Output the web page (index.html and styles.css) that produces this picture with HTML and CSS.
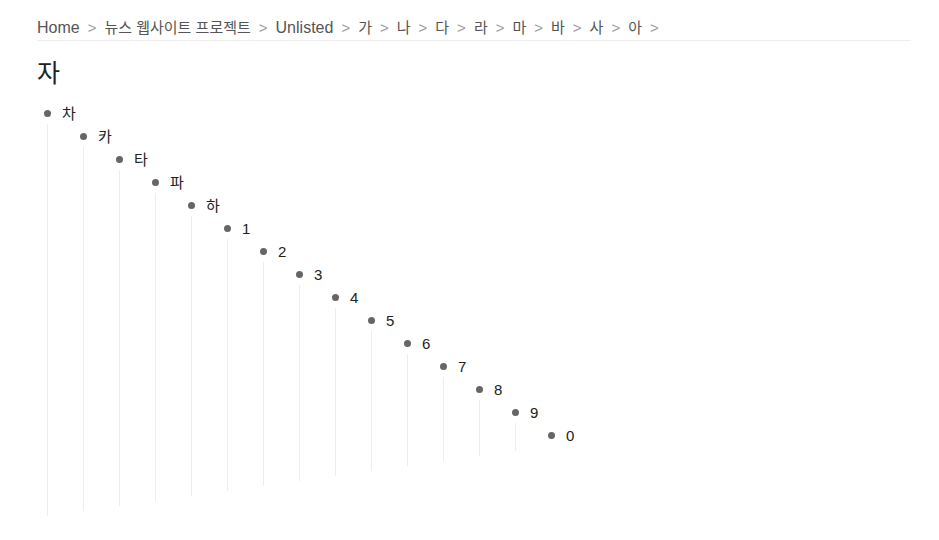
FILE: index.html
```
<!DOCTYPE html>
<html lang="ko">
<head>
<meta charset="utf-8">
<title>자</title>
<link rel="stylesheet" href="styles.css">
</head>
<body>
<main class="page">
<nav class="crumbs" aria-label="Breadcrumb">
<a class="latin" href="#">Home</a><span class="sep">&gt;</span>
<a href="#">뉴스 웹사이트 프로젝트</a><span class="sep">&gt;</span>
<a class="latin" href="#">Unlisted</a><span class="sep">&gt;</span>
<a href="#">가</a><span class="sep">&gt;</span>
<a href="#">나</a><span class="sep">&gt;</span>
<a href="#">다</a><span class="sep">&gt;</span>
<a href="#">라</a><span class="sep">&gt;</span>
<a href="#">마</a><span class="sep">&gt;</span>
<a href="#">바</a><span class="sep">&gt;</span>
<a href="#">사</a><span class="sep">&gt;</span>
<a href="#">아</a><span class="sep">&gt;</span>
</nav>
<h1 class="title">자</h1>
<ul class="tree"><li><div class="row">차</div>
<ul><li><div class="row">카</div>
<ul><li><div class="row">타</div>
<ul><li><div class="row">파</div>
<ul><li><div class="row">하</div>
<ul><li><div class="row">1</div>
<ul><li><div class="row">2</div>
<ul><li><div class="row">3</div>
<ul><li><div class="row">4</div>
<ul><li><div class="row">5</div>
<ul><li><div class="row">6</div>
<ul><li><div class="row">7</div>
<ul><li><div class="row">8</div>
<ul><li><div class="row">9</div>
<ul><li><div class="row">0</div></li></ul>
</li></ul></li></ul></li></ul></li></ul></li></ul></li></ul></li></ul></li></ul></li></ul></li></ul></li></ul></li></ul></li></ul></li></ul>
</main>
</body>
</html>
```
FILE: styles.css
```
body {
  margin: 0;
  background: #fff;
  color: #222;
  font-family: "Liberation Sans", "Noto Sans CJK KR", sans-serif;
  font-size: 15px;
  line-height: 21px;
}

.page {
  padding: 16px 28px 0 37px;
}

.crumbs {
  display: flex;
  gap: 8px;
  border-bottom: 1px solid #eee;
  line-height: 24px;
  white-space: nowrap;
}

.crumbs a {
  color: #555;
  text-decoration: none;
}

.crumbs .latin {
  font-size: 16px;
}

.sep {
  color: #999;
}

.title {
  margin: 16px 0 12px;
  font-size: 25px;
  font-weight: 400;
  line-height: 32px;
}

.tree,
.tree ul {
  margin: 0;
  padding: 0;
  list-style: none;
}

.tree ul {
  margin-left: 10px;
  padding: 0 0 5px 25px;
  border-left: 1px solid #eee;
}

.row {
  display: flex;
  align-items: center;
  gap: 11px;
  padding-top: 2px;
}

.row::before {
  content: "";
  width: 7px;
  height: 7px;
  margin-left: 7px;
  border-radius: 50%;
  background: #666;
}
```
